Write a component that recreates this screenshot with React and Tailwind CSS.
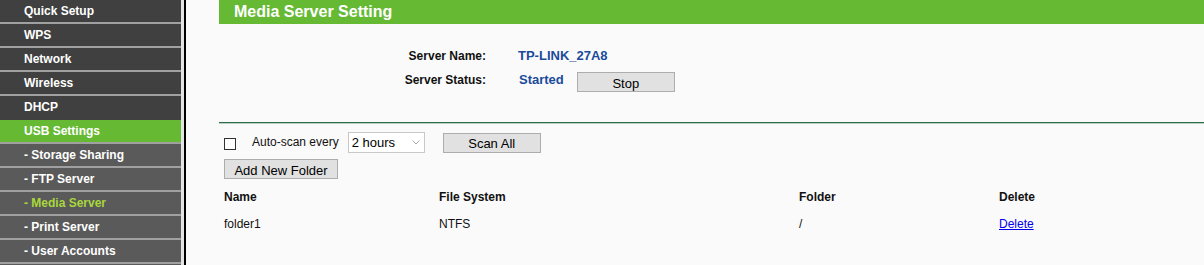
import React from "react";

const topItems = ["Quick Setup", "WPS", "Network", "Wireless", "DHCP"];
const subItems = ["- Storage Sharing", "- FTP Server", "- Media Server", "- Print Server", "- User Accounts"];

function Sidebar() {
  return (
    <div className="w-[181px] shrink-0 flex flex-col bg-[#5a5a5a]">
      {topItems.map((t, i) => (
        <div
          key={t}
          className={`h-[24px] pl-[24px] bg-[#404040] text-white font-bold text-[12px] leading-[22px] border-b-2 ${
            i === topItems.length - 1 ? "border-[#404040]" : "border-[#a0a0a0]"
          }`}
        >
          {t}
        </div>
      ))}
      <div className="h-[24px] pl-[24px] bg-[#66b933] text-white font-bold text-[12px] leading-[22px] border-b-2 border-[#a0a0a0]">
        USB Settings
      </div>
      {subItems.map((t) => (
        <div
          key={t}
          className={`h-[24px] pl-[24px] bg-[#5a5a5a] font-bold text-[12px] leading-[22px] border-b-2 border-[#a0a0a0] ${
            t === "- Media Server" ? "text-[#a8d63c]" : "text-white"
          }`}
        >
          {t}
        </div>
      ))}
    </div>
  );
}

function Btn({ children, className = "" }) {
  return (
    <div
      className={`flex items-center justify-center bg-[#e1e1e1] border border-[#adadad] text-[13px] text-black leading-none ${className}`}
    >
      <span className="pt-[2px]">{children}</span>
    </div>
  );
}

export default function App() {
  return (
    <div
      className="w-[1204px] h-[265px] overflow-hidden flex bg-[#fafafa]"
      style={{ fontFamily: '"Liberation Sans", Arial, sans-serif' }}
    >
      <Sidebar />
      <div className="w-[3px] shrink-0 bg-[#e4e4e4]" />
      <div className="w-[2px] shrink-0 bg-black" />
      <div className="flex-1 pl-[33px] flex flex-col">
        <div className="h-[24px] bg-[#66b933] pl-[15px] text-white font-bold text-[16px] leading-[24px]">
          Media Server Setting
        </div>

        <div className="mt-[20px] flex flex-col">
          <div className="h-[24px] flex items-center">
            <div className="w-[267px] text-right font-bold text-[12px] text-[#111]">Server Name:</div>
            <div className="ml-[32px] font-bold text-[13px] text-[#1a4b9b]">TP-LINK_27A8</div>
          </div>
          <div className="h-[24px] flex items-center">
            <div className="w-[267px] text-right font-bold text-[12px] text-[#111]">Server Status:</div>
            <div className="ml-[33px] font-bold text-[13px] text-[#1a4b9b]">Started</div>
            <Btn className="ml-[13px] w-[98px] h-[20px] mt-[4px]">Stop</Btn>
          </div>
        </div>

        <div className="mt-[30px] h-[2px] border-t border-[#2f6b4f] bg-[#b5d0bf]" />

        <div className="mt-[8px] flex items-center h-[21px] pl-[5px]">
          <div className="w-[12px] h-[12px] border border-[#333] bg-white mt-[2px]" />
          <div className="ml-[16px] text-[12px] text-[#111] -mt-[2px]">Auto-scan every</div>
          <div className="ml-[9px] w-[77px] h-[21px] border border-[#c8c8c8] bg-white flex items-center pl-[3px] pr-[4px] text-[13px] text-black">
            <span className="flex-1">2 hours</span>
            <svg width="8" height="5" viewBox="0 0 8 5" className="text-[#aaa]">
              <path d="M0.5 0.5 L4 4 L7.5 0.5" fill="none" stroke="currentColor" strokeWidth="1" />
            </svg>
          </div>
          <Btn className="ml-[18px] w-[98px] h-[20px]">Scan All</Btn>
        </div>

        <div className="mt-[6px] pl-[5px]">
          <Btn className="w-[114px] h-[20px]">Add New Folder</Btn>
        </div>

        <div className="mt-[9px] pl-[5px] grid grid-cols-[215px_360px_200px_1fr] text-[12px] text-[#111]">
          <div className="h-[16px] font-bold">Name</div>
          <div className="h-[16px] font-bold">File System</div>
          <div className="h-[16px] font-bold">Folder</div>
          <div className="h-[16px] font-bold">Delete</div>
          <div className="mt-[11px]">folder1</div>
          <div className="mt-[11px]">NTFS</div>
          <div className="mt-[11px]">/</div>
          <div className="mt-[11px]">
            <span className="text-[#0000ee] underline">Delete</span>
          </div>
        </div>
      </div>
    </div>
  );
}
